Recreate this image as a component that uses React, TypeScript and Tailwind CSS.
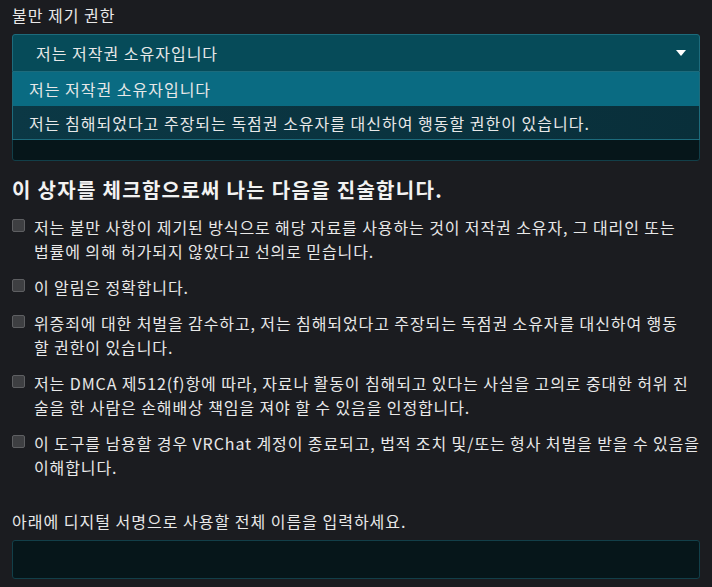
import React from "react";

// each statement is stored as the lines it shows in the form
const statements: string[][] = [
  [
    "저는 불만 사항이 제기된 방식으로 해당 자료를 사용하는 것이 저작권 소유자, 그 대리인 또는",
    "법률에 의해 허가되지 않았다고 선의로 믿습니다.",
  ],
  ["이 알림은 정확합니다."],
  [
    "위증죄에 대한 처벌을 감수하고, 저는 침해되었다고 주장되는 독점권 소유자를 대신하여 행동",
    "할 권한이 있습니다.",
  ],
  [
    "저는 DMCA 제512(f)항에 따라, 자료나 활동이 침해되고 있다는 사실을 고의로 중대한 허위 진",
    "술을 한 사람은 손해배상 책임을 져야 할 수 있음을 인정합니다.",
  ],
  [
    "이 도구를 남용할 경우 VRChat 계정이 종료되고, 법적 조치 및/또는 형사 처벌을 받을 수 있음을",
    "이해합니다.",
  ],
];

export default function App() {
  return (
    <div
      className="min-h-screen bg-[#1b1c20] px-[12px] pt-[3px] text-[16px] tracking-[1px] text-[#e8e8e8]"
      style={{ fontFamily: '"Noto Sans CJK KR", "Noto Sans", sans-serif' }}
    >
      {/* Complaint authority */}
      <div className="leading-[24px]">불만 제기 권한</div>
      <div className="relative mt-[7px]">
        <div className="flex h-[38px] items-center justify-between rounded-t-[3px] border border-[#1d6b7c] bg-[#064b59] pl-[23px] pr-[12px]">
          <span>저는 저작권 소유자입니다</span>
          <svg width="10" height="6" viewBox="0 0 10 6" className="mr-[1px]">
            <path d="M0 0 H10 L5 6 Z" fill="#ffffff" />
          </svg>
        </div>
        <div className="absolute left-0 right-0 top-[38px] z-10 border-x border-b border-[#1d6b7c]">
          <div className="flex h-[34px] items-center bg-[#0a6b82] pl-[16px]">저는 저작권 소유자입니다</div>
          <div className="flex h-[33px] items-center bg-gradient-to-r from-[#0b3845] to-[#092f3a] pl-[16px]">
            저는 침해되었다고 주장되는 독점권 소유자를 대신하여 행동할 권한이 있습니다.
          </div>
        </div>
        <div className="mt-[10px] h-[79px] rounded-[3px] border border-[#123f49] bg-[#06161a]" />
      </div>

      {/* Statements */}
      <h2 className="mt-[15px] text-[20px] font-bold leading-[28px] tracking-[1.3px] text-[#f2f2f2]">
        이 상자를 체크함으로써 나는 다음을 진술합니다.
      </h2>
      <div className="mt-[11px] flex flex-col gap-[12px]">
        {statements.map((lines) => (
          <label key={lines[0]} className="flex items-start gap-[9px] leading-[24px] tracking-[0.9px]">
            <span className="mt-[4px] h-[13px] w-[13px] shrink-0 rounded-[2px] border border-[#5e5f62] bg-[#3e3f42]" />
            <span className="flex flex-col whitespace-nowrap">
              {lines.map((l) => (
                <span key={l}>{l}</span>
              ))}
            </span>
          </label>
        ))}
      </div>

      {/* Signature */}
      <div className="mt-[30px] leading-[24px]">아래에 디지털 서명으로 사용할 전체 이름을 입력하세요.</div>
      <div className="mt-[7px] h-[39px] rounded-[3px] border border-[#123f49] bg-[#06161a]" />
    </div>
  );
}
